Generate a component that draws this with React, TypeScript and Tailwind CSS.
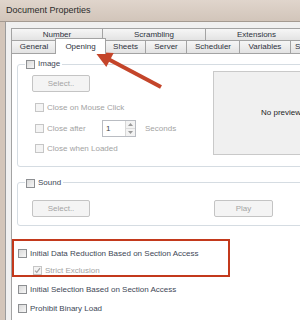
import React from 'react'

function Check({ checked = false, disabled = false }: { checked?: boolean; disabled?: boolean }) {
  return (
    <span
      className={
        disabled
          ? 'w-[9px] h-[9px] shrink-0 border border-[#c6c6c6] bg-[#f4f4f4] flex items-center justify-center'
          : 'w-[9px] h-[9px] shrink-0 border border-[#8d8f92] bg-gradient-to-br from-[#d9d9d9] to-[#f7f7f7] flex items-center justify-center'
      }
    >
      {checked && (
        <svg width="7" height="7" viewBox="0 0 7 7">
          <path d="M1 3.6 L2.8 5.4 L6 1.2" fill="none" stroke="#a2a2a2" strokeWidth="1.2" />
        </svg>
      )}
    </span>
  )
}

function Row({ label, disabled = false, checked = false, className = '' }: { label: string; disabled?: boolean; checked?: boolean; className?: string }) {
  return (
    <div className={'flex items-center gap-[3px] h-[9px] ' + className}>
      <Check checked={checked} disabled={disabled} />
      <span className={disabled ? 'text-[#a3a3a3] whitespace-nowrap' : 'text-[#3e4756] whitespace-nowrap'}>{label}</span>
    </div>
  )
}

function Btn({ label, className = '' }: { label: string; className?: string }) {
  return (
    <div
      className={
        'h-[17px] shrink-0 rounded-[2px] border border-[#c4c4c4] bg-[#f4f4f4] flex items-center justify-center text-[#a4a4a4] ' +
        className
      }
    >
      {label}
    </div>
  )
}

const tabBack = 'shrink-0 border-t border-l border-[#a3a3a3] bg-gradient-to-b from-[#f6f6f6] to-[#e3e3e3] flex items-center justify-center text-[#2e3340]'

export default function App() {
  return (
    <div className="relative w-[300px] h-[320px] overflow-hidden bg-[#d6c9be] font-['Liberation_Sans',Arial,sans-serif] text-[8px] leading-none text-[#3e4756]">
      <div className="h-[22px] border-b border-[#a49a91] pl-[6px] flex items-center text-[9px] text-[#2b2b2b] bg-gradient-to-b from-[#e0d5cc] to-[#d2c5ba]">
        Document Properties
      </div>
      <div className="flex h-[298px]">
        <div className="w-[6px] shrink-0 border-r border-[#9b9b9b] bg-[#d3c5b9]" />
        <div className="flex-1 min-w-0 bg-[#f0f0f0] pl-[5px] pt-[6px] flex flex-col">
          {/* back row of tabs */}
          <div className="flex h-[12px]">
            <div className={tabBack + ' w-[91px]'}>Number</div>
            <div className={tabBack + ' w-[103px]'}>Scrambling</div>
            <div className={tabBack + ' w-[103px] border-r'}>Extensions</div>
          </div>
          {/* front row of tabs */}
          <div className="flex items-end h-[13px]">
            <div className={tabBack + ' w-[45px] h-[13px]'}>General</div>
            <div className="relative z-10 -ml-[1px] -mt-[2px] -mb-[1px] w-[51px] h-[16px] shrink-0 border-t border-x border-[#a3a3a3] bg-white flex justify-center pt-[4px] text-[#2e3340]">
              Opening
            </div>
            <div className={tabBack + ' -ml-[1px] w-[40px] h-[13px]'}>Sheets</div>
            <div className={tabBack + ' w-[41px] h-[13px]'}>Server</div>
            <div className={tabBack + ' w-[53px] h-[13px]'}>Scheduler</div>
            <div className={tabBack + ' w-[51px] h-[13px]'}>Variables</div>
            <div className={tabBack + ' w-[50px] h-[13px] justify-start pl-[4px]'}>S</div>
          </div>

          {/* tab page */}
          <div className="flex-1 w-[320px] border-t border-l border-[#a3a3a3] bg-white flex flex-col">
            {/* Image group */}
            <div className="ml-[5px] mt-[10px] h-[103px] border border-[#d5dce2] rounded-[3px]">
              <div className="-mt-[6px] ml-[7px] h-[10px] w-fit pl-[1px] pr-[2px] bg-white flex items-center gap-[3px]">
                <Check />
                <span>Image</span>
              </div>
              <div className="flex items-start">
                <div className="w-[195px] shrink-0 flex flex-col">
                  <Btn label="Select.." className="ml-[14px] mt-[6px] w-[58px]" />
                  <Row label="Close on Mouse Click" disabled className="ml-[17px] mt-[11px]" />
                  <div className="ml-[17px] mt-[8px] h-[17px] flex items-center">
                    <Check disabled />
                    <span className="ml-[3px] w-[55px] text-[#a3a3a3]">Close after</span>
                    <div className="w-[34px] h-[17px] border border-[#b9bcc2] flex">
                      <div className="flex-1 flex items-center pl-[3px] text-[#444]">1</div>
                      <div className="w-[10px] flex flex-col border-l border-[#d8d8d8]">
                        <div className="flex-1 bg-[#f3f3f3] border-b border-[#dcdcdc] flex items-center justify-center">
                          <svg width="5" height="3" viewBox="0 0 5 3"><path d="M0 3 L2.5 0 L5 3Z" fill="#9a9a9a" /></svg>
                        </div>
                        <div className="flex-1 bg-[#f3f3f3] flex items-center justify-center">
                          <svg width="5" height="3" viewBox="0 0 5 3"><path d="M0 0 L2.5 3 L5 0Z" fill="#9a9a9a" /></svg>
                        </div>
                      </div>
                    </div>
                    <span className="ml-[9px] text-[#a3a3a3]">Seconds</span>
                  </div>
                  <Row label="Close when Loaded" disabled className="ml-[17px] mt-[7px]" />
                </div>
                <div className="mt-[2px] w-[136px] h-[84px] shrink-0 bg-[#f0f0f0] border border-[#c9c9c9] flex items-center justify-center text-[#1e1e1e]">
                  No preview
                </div>
              </div>
            </div>

            {/* Sound group */}
            <div className="ml-[5px] mt-[15px] h-[44px] border border-[#d5dce2] rounded-[3px]">
              <div className="-mt-[5px] ml-[7px] h-[10px] w-fit pl-[1px] pr-[2px] bg-white flex items-center gap-[3px]">
                <Check />
                <span>Sound</span>
              </div>
              <div className="mt-[12px] flex">
                <Btn label="Select.." className="ml-[14px] w-[58px]" />
                <Btn label="Play" className="ml-[124px] w-[59px]" />
              </div>
            </div>

            <Row label="Initial Data Reduction Based on Section Access" className="ml-[6px] mt-[23px]" />
            <Row label="Strict Exclusion" disabled checked className="ml-[21px] mt-[8px]" />
            <Row label="Initial Selection Based on Section Access" className="ml-[6px] mt-[10px]" />
            <Row label="Prohibit Binary Load" className="ml-[6px] mt-[10px]" />
          </div>
        </div>
      </div>

      {/* annotations */}
      <div className="absolute left-[12px] top-[239px] w-[218px] h-[38px] border-2 border-[#c3391c]" />
      <svg className="absolute left-0 top-0 pointer-events-none" width="300" height="320" viewBox="0 0 300 320">
        <line x1="109" y1="59.5" x2="161" y2="87" stroke="#c4452a" strokeWidth="4" />
        <polygon points="95,52 113.7,52.9 106.3,67.1" fill="#c4452a" />
      </svg>
    </div>
  )
}
